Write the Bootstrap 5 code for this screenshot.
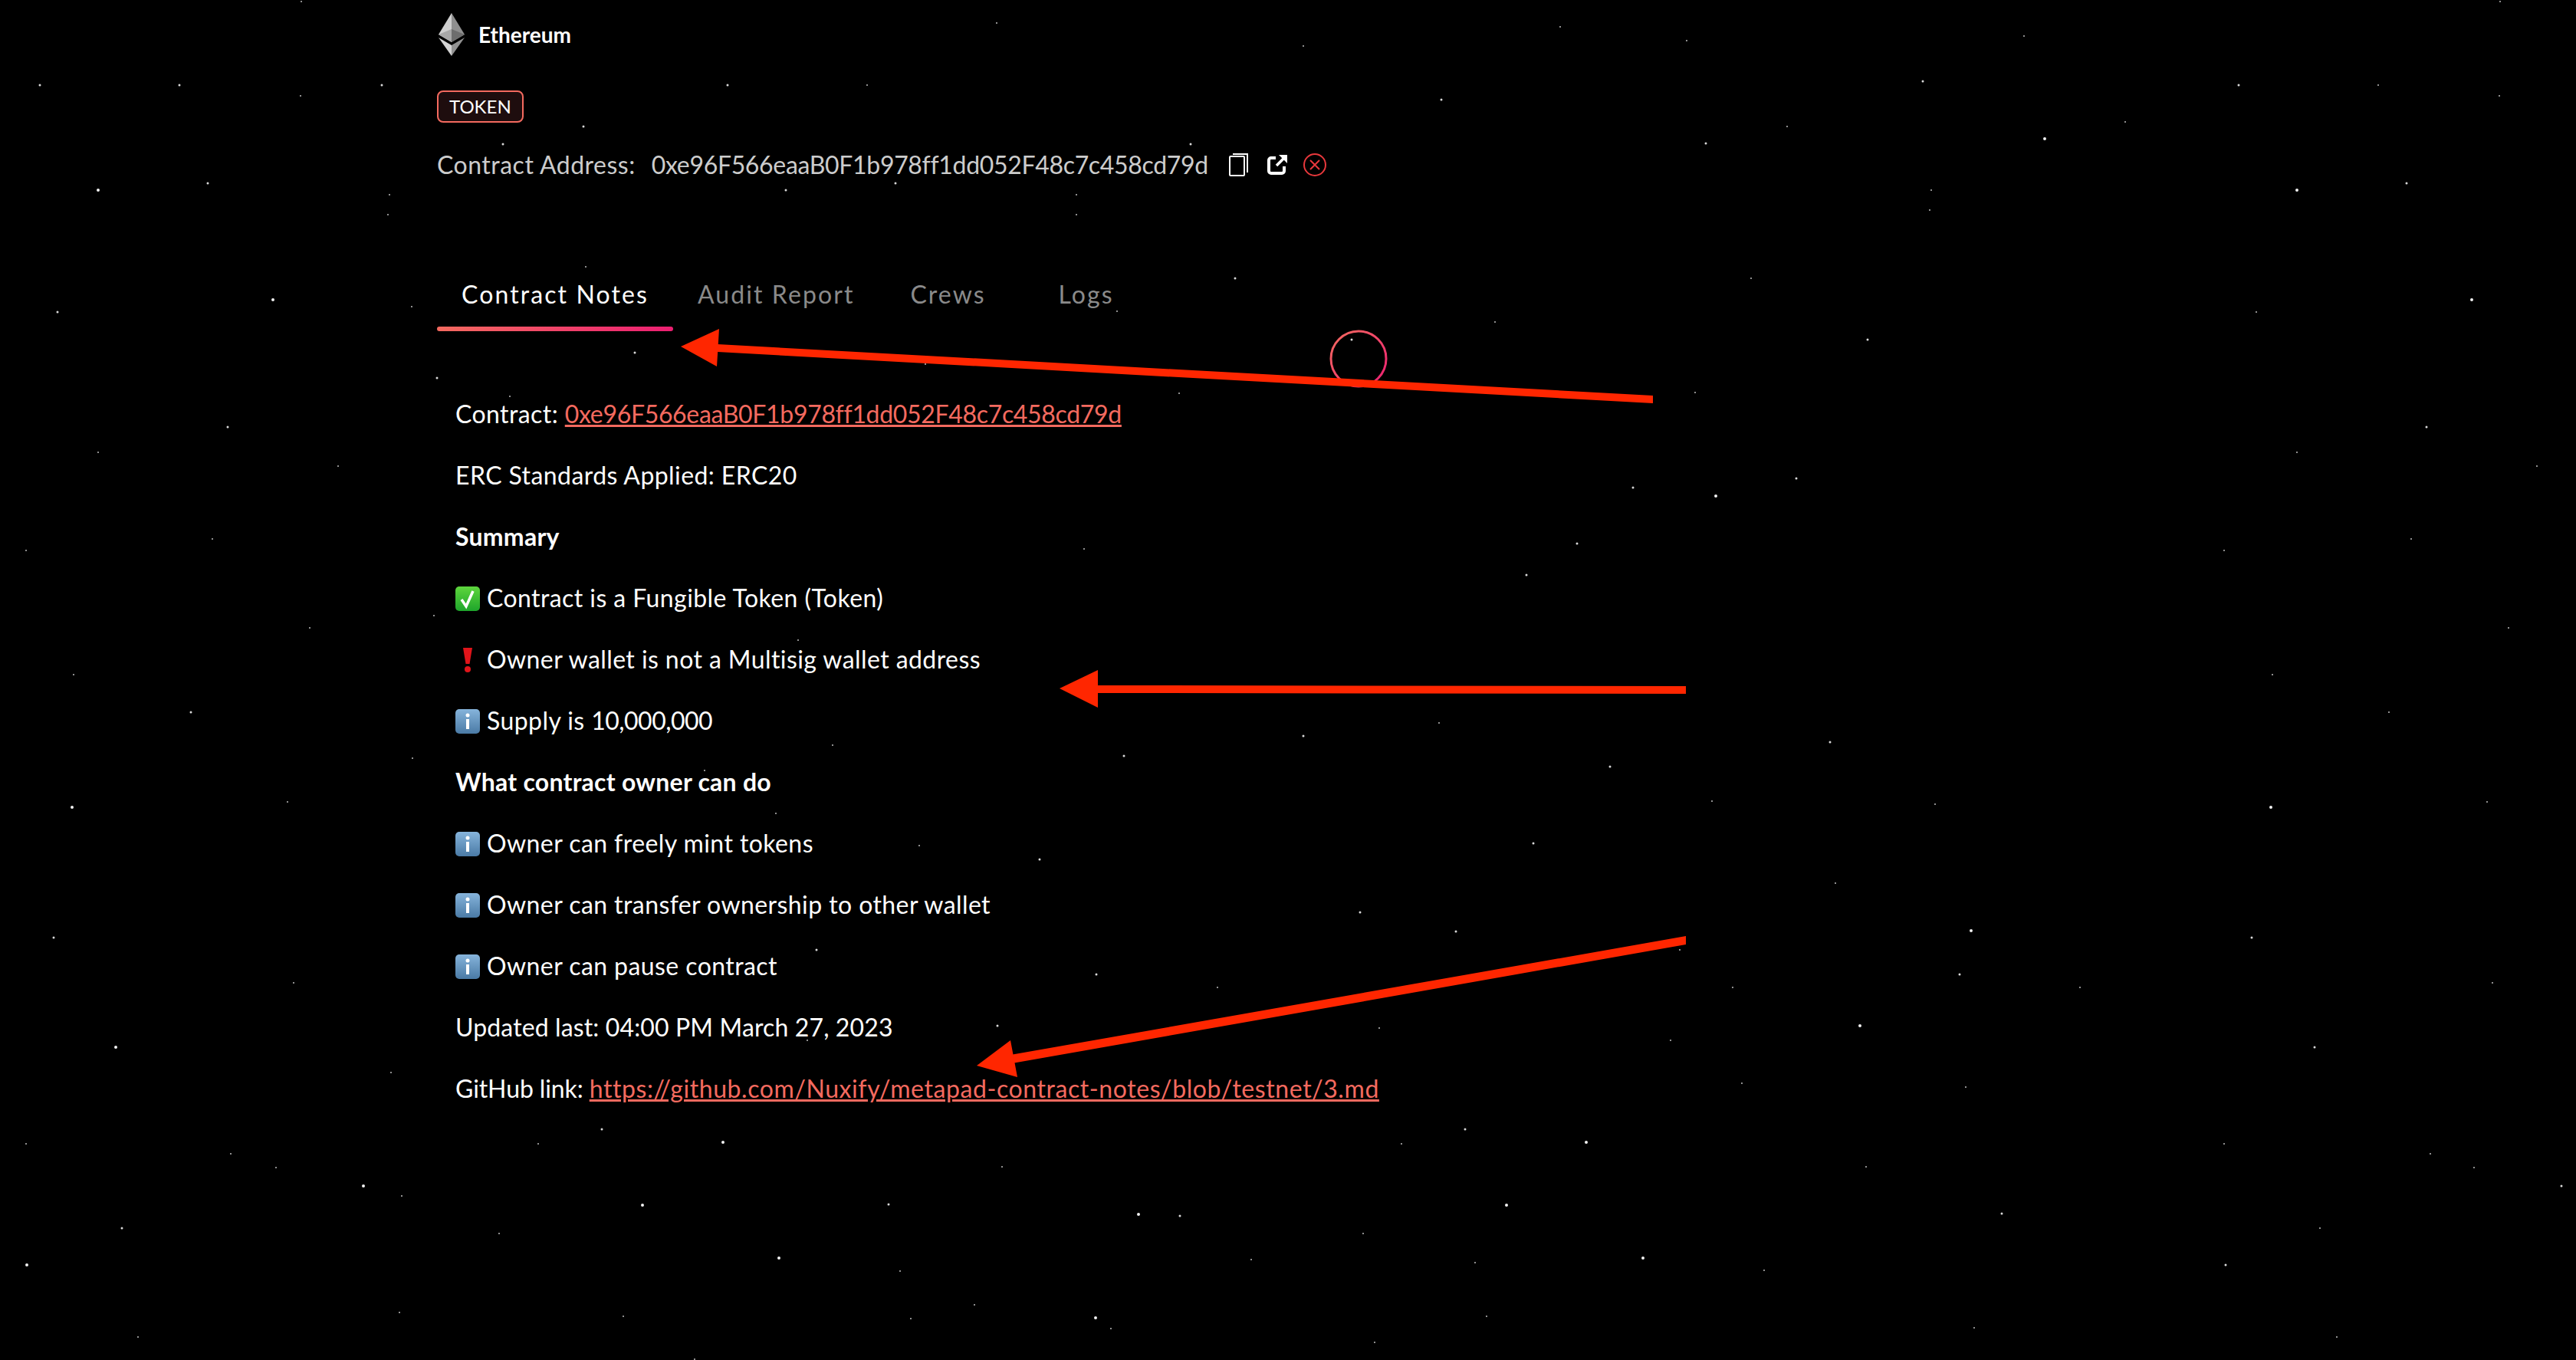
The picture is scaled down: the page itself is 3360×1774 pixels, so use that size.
<!DOCTYPE html>
<html lang="en">
<head>
<meta charset="utf-8">
<title>Contract Notes</title>
<link href="https://cdn.jsdelivr.net/npm/bootstrap@5.3.0/dist/css/bootstrap.min.css" rel="stylesheet">
<style>
html,body{height:1774px;overflow:hidden;background:#000}
body{font-family:"Lato","Liberation Sans",sans-serif;color:#fff;font-size:32px;line-height:48px;position:relative}
.sky,.marks{position:absolute;left:0;top:0;width:3360px;height:1774px}
.sky{z-index:0}
.marks{z-index:2;pointer-events:none}
.page-wrap{position:relative;z-index:1;padding:17px 0 0 570px}
.chain-logo{margin-left:2px}
.chain-name{font-size:28px;font-weight:700;line-height:56px;margin-left:18px}
.type-tag{display:inline-block;margin-top:45px;height:42px;line-height:38px;padding:0 14px;border:2px solid #f46a5f;border-radius:8px;background:#1e0d0e;font-size:24px}
.addr-row{margin-top:33px;height:44px;line-height:44px;color:#ccc;font-size:32px;letter-spacing:.5px}
.addr-value{margin-left:21px;margin-right:27px}
.hash-text{letter-spacing:-.33px}
.ic-ext{margin-left:25px}
.ic-close{margin-left:21px}
.tab-row{margin-top:123px}
.tab-row .nav-link{padding:0 32px;min-width:180px;text-align:center;color:#8a8a8a;font-size:32px;line-height:48px;letter-spacing:2.1px}
.tab-row .nav-link::after{content:"";display:block;height:6px;margin:18px -32px 0;border-radius:3px}
.tab-row .nav-link.active{color:#fff}
.tab-row .nav-link.active::after{background:linear-gradient(90deg,#f46a5f,#ec1f72)}
.notes{margin-top:84px;padding-left:24px;letter-spacing:.42px}
.notes p{margin:0 0 32px;height:48px;white-space:nowrap}
.notes a{color:#f46a5f}
.notes strong{font-weight:700;letter-spacing:.25px}
.nums-text{letter-spacing:-.5px}
.date-text{letter-spacing:.13px}
.label-text{letter-spacing:-.1px}
.url-text{letter-spacing:.58px}
.emo{display:inline-block;width:32px;height:32px;vertical-align:-5px;margin-right:9px}
</style>
</head>
<body>
<svg class="sky" viewBox="0 0 3360 1774" aria-hidden="true" fill="none" stroke="#fff" stroke-linecap="round">
<path stroke-width="2" opacity=".75" d="M393 2h0M392 125h0M508 254h0M506 280h0M537 400h0M128 590h0M441 608h0M277 703h0M34 718h0M404 819h0M96 880h0M538 989h0M375 1046h0M383 1282h0M510 1399h0M34 1492h0M301 1505h0M360 1523h0M524 1560h0M521 1712h0M180 1744h0M3261 2h0M2640 47h0M2200 53h0M3102 111h0M3260 125h0M2331 165h0M2772 159h0M2519 248h0M2517 274h0M2284 363h0M2943 407h0M2211 512h0M2996 590h0M3309 608h0M3145 703h0M2901 718h0M3272 819h0M2964 880h0M3116 929h0M2233 1045h0M2524 1049h0M3244 1046h0M2394 1152h0M2260 1288h0M2713 1288h0M3251 1282h0M2272 1413h0M2564 1418h0M2901 1492h0M3170 1505h0M3227 1523h0M2434 1522h0M3026 1602h0M2301 1657h0M2575 1732h0M3048 1744h0M702 1492h0M1828 1492h0M1307 1522h0M1778 1609h0M651 1609h0M1632 1643h0M1924 1647h0M1174 1658h0M1271 1702h0M813 1717h0M1188 1720h0M1449 1733h0M1939 1717h0M1793 1751h0M906 1773h0M1131 111h0M1404 254h0M1404 280h0M1457 406h0M1207 475h0M1538 513h0M764 348h0M665 517h0M566 803h0M1041 835h0M1086 972h0M919 1005h0M1012 1061h0M1199 1103h0M1053 1357h0M1588 1288h0M1799 1341h0M2179 1357h0M2191 1239h0M1877 943h0M1414 716h0M2035 35h0M1700 60h0M1300 30h0M1950 420h0"/>
<path stroke-width="3" opacity=".85" d="M52 111h0M234 111h0M498 111h0M271 239h0M75 407h0M297 557h0M249 929h0M70 1223h0M159 1602h0M2508 106h0M2920 111h0M3139 239h0M2436 443h0M3165 557h0M2343 624h0M2387 968h0M2937 1223h0M2556 1271h0M3019 1366h0M2611 1583h0M2903 1650h0M3341 1547h0M2225 187h0M785 1473h0M1911 1473h0M1159 1571h0M1539 1586h0M949 111h0M761 165h0M656 188h0M1025 248h0M1168 239h0M1553 188h0M1611 363h0M1763 443h0M828 460h0M570 493h0M1356 1121h0M1065 1239h0M1301 1338h0M1774 1190h0M1899 1215h0M1430 1271h0M2130 636h0M1991 750h0M2057 709h0M1466 986h0M2100 1000h0M2000 1100h0M1700 960h0M1880 130h0"/>
<path stroke-width="4" opacity=".95" d="M128 248h0M356 391h0M94 1053h0M151 1366h0M474 1547h0M35 1650h0M2667 181h0M2996 248h0M3224 391h0M2238 647h0M2962 1053h0M2571 1214h0M2426 1338h0M838 1572h0M943 1490h0M2069 1490h0M1965 1572h0M1485 1584h0M1016 1641h0M2143 1641h0M1429 1719h0"/>
</svg>

<main class="page-wrap">
  <div class="d-flex align-items-center">
    <svg class="chain-logo" width="34" height="56" viewBox="0 0 34 56" aria-hidden="true"><polygon points="17,0 0,28 17,38" fill="#cfcfcf"/><polygon points="17,0 34,28 17,38" fill="#8f8f8f"/><polygon points="0,28 17,21 17,38" fill="#a8a8a8"/><polygon points="34,28 17,21 17,38" fill="#6d6d6d"/><polygon points="0,32 17,42 17,56" fill="#d4d4d4"/><polygon points="34,32 17,42 17,56" fill="#929292"/></svg>
    <span class="chain-name">Ethereum</span>
  </div>
  <div><span class="type-tag">TOKEN</span></div>
  <div class="addr-row d-flex align-items-center">
    <span>Contract Address:</span>
    <span class="addr-value hash-text">0xe96F566eaaB0F1b978ff1dd052F48c7c458cd79d</span>
    <svg width="25" height="30" viewBox="0 0 25 30" fill="none" stroke="#fff" stroke-width="2" aria-hidden="true"><rect x="1" y="4" width="19" height="25" rx="1"/><path d="M5 1h19v24"/></svg>
    <svg class="ic-ext" width="26" height="26" viewBox="0 0 26 26" fill="none" stroke="#fff" stroke-width="4" aria-hidden="true"><path d="M11 4H5a3 3 0 0 0-3 3v14a3 3 0 0 0 3 3h14a3 3 0 0 0 3-3v-6"/><path d="M12 14l9-9" stroke-width="3.5"/><polygon points="15,0 26,0 26,11" fill="#fff" stroke="none"/></svg>
    <svg class="ic-close" width="30" height="30" viewBox="0 0 30 30" fill="none" stroke="#e8383c" stroke-width="2" aria-hidden="true"><circle cx="15" cy="15" r="14"/><path d="M9 9l12 12M21 9L9 21"/></svg>
  </div>
  <ul class="nav tab-row">
    <li class="nav-item"><a class="nav-link active" href="#">Contract Notes</a></li>
    <li class="nav-item"><a class="nav-link" href="#">Audit Report</a></li>
    <li class="nav-item"><a class="nav-link" href="#">Crews</a></li>
    <li class="nav-item"><a class="nav-link" href="#">Logs</a></li>
  </ul>
  <section class="notes">
    <p>Contract: <a class="hash-text" href="#">0xe96F566eaaB0F1b978ff1dd052F48c7c458cd79d</a></p>
    <p>ERC Standards Applied: ERC20</p>
    <p><strong>Summary</strong></p>
    <p><svg class="emo" viewBox="0 0 32 32" aria-hidden="true"><defs><linearGradient id="gc" x1="0" y1="0" x2="0" y2="1"><stop offset="0" stop-color="#5ed63d"/><stop offset="1" stop-color="#1ea52b"/></linearGradient><linearGradient id="gi" x1="0" y1="0" x2="0" y2="1"><stop offset="0" stop-color="#86b4db"/><stop offset="1" stop-color="#4a7aa5"/></linearGradient></defs><rect width="32" height="32" rx="5" fill="url(#gc)"/><path d="M8 17l6 9 9-20" fill="none" stroke="#fff" stroke-width="3.5"/></svg>Contract is a Fungible Token (Token)</p>
    <p><svg class="emo" viewBox="0 0 32 32" aria-hidden="true"><path d="M10 0h12l-3.5 21h-5z" fill="#e0141a"/><circle cx="16" cy="28" r="4" fill="#e0141a"/></svg>Owner wallet is not a Multisig wallet address</p>
    <p><svg class="emo" viewBox="0 0 32 32" aria-hidden="true"><rect width="32" height="32" rx="5" fill="url(#gi)"/><circle cx="16" cy="8" r="2.5" fill="#fff"/><rect x="14" y="13" width="4" height="13" fill="#fff"/></svg>Supply is <span class="nums-text">10,000,000</span></p>
    <p><strong>What contract owner can do</strong></p>
    <p><svg class="emo" viewBox="0 0 32 32" aria-hidden="true"><rect width="32" height="32" rx="5" fill="url(#gi)"/><circle cx="16" cy="8" r="2.5" fill="#fff"/><rect x="14" y="13" width="4" height="13" fill="#fff"/></svg>Owner can freely mint tokens</p>
    <p><svg class="emo" viewBox="0 0 32 32" aria-hidden="true"><rect width="32" height="32" rx="5" fill="url(#gi)"/><circle cx="16" cy="8" r="2.5" fill="#fff"/><rect x="14" y="13" width="4" height="13" fill="#fff"/></svg>Owner can transfer ownership to other wallet</p>
    <p><svg class="emo" viewBox="0 0 32 32" aria-hidden="true"><rect width="32" height="32" rx="5" fill="url(#gi)"/><circle cx="16" cy="8" r="2.5" fill="#fff"/><rect x="14" y="13" width="4" height="13" fill="#fff"/></svg>Owner can pause contract</p>
    <p class="date-text">Updated last: 04:00 PM March 27, 2023</p>
    <p><span class="label-text">GitHub link: </span><a class="url-text" href="#">https://github.com/Nuxify/metapad-contract-notes/blob/testnet/3.md</a></p>
  </section>
</main>

<svg class="marks" viewBox="0 0 3360 1774" aria-hidden="true">
  <defs><linearGradient id="ring" x1="0" y1="0" x2="1" y2="1"><stop offset="0" stop-color="#f46a5f"/><stop offset="1" stop-color="#ec1f72"/></linearGradient></defs>
  <circle cx="1772" cy="468" r="36" fill="none" stroke="url(#ring)" stroke-width="3"/>
  <g fill="#ff2600">
    <polygon points="2156,516 2156,526 936,459 936,449"/>
    <polygon points="888,452 938,429 935,478"/>
    <polygon points="2199,895 2199,905 1430,904 1430,894"/>
    <polygon points="1382,898 1432,874 1432,923"/>
    <polygon points="2199,1221 2199,1232 1320,1387 1318,1376"/>
    <polygon points="1274,1390 1318,1357 1327,1405"/>
  </g>
</svg>
</body>
</html>
